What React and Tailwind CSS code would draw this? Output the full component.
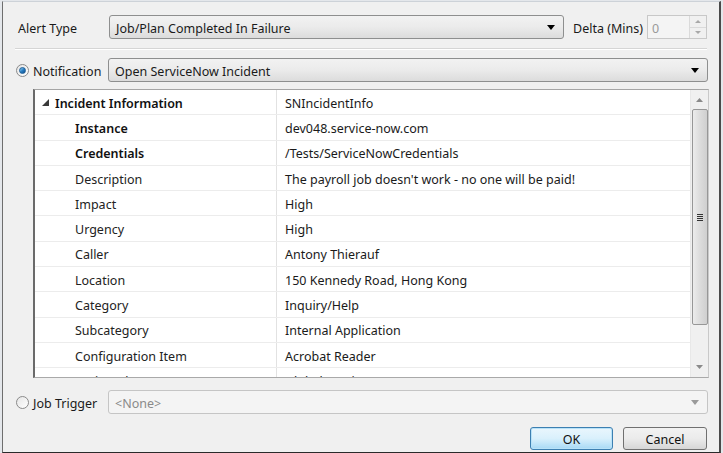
import React from "react";

const Arrow = ({ color = "#000" }) => (
  <svg width="8" height="5" viewBox="0 0 8 5"><path d="M0 0 H8 L4 5 Z" fill={color} /></svg>
);

const Combo = ({ text, width, disabled }) => (
  <div
    className={`flex items-center h-[24px] rounded-[3px] border pl-[6px] pr-[8px] ${
      disabled
        ? "border-[#c5c5c5] bg-[#f4f4f4] text-[#8a8a8a]"
        : "border-[#8e8f8f] bg-gradient-to-b from-[#f2f2f2] via-[#ebebeb] to-[#dcdcdc] text-[#1a1a1a]"
    }`}
    style={{ width }}
  >
    <span className="flex-1 whitespace-nowrap leading-[16px] pt-[3px]">{text}</span>
    <Arrow color={disabled ? "#9a9a9a" : "#000"} />
  </div>
);

const Radio = ({ checked }) => (
  <div className="w-[13px] h-[13px] rounded-full border border-[#8a8a8a] bg-gradient-to-br from-[#e6e6e6] to-[#ffffff] flex items-center justify-center">
    {checked && (
      <div className="w-[7px] h-[7px] rounded-full bg-gradient-to-br from-[#8fd3f5] via-[#2a7fc4] to-[#0d4f8c] border border-[#1d5e97]" />
    )}
  </div>
);

const rows = [
  ["Instance", "dev048.service-now.com", true],
  ["Credentials", "/Tests/ServiceNowCredentials", true],
  ["Description", "The payroll job doesn't work - no one will be paid!", false],
  ["Impact", "High", false],
  ["Urgency", "High", false],
  ["Caller", "Antony Thierauf", false],
  ["Location", "150 Kennedy Road, Hong Kong", false],
  ["Category", "Inquiry/Help", false],
  ["Subcategory", "Internal Application", false],
  ["Configuration Item", "Acrobat Reader", false],
  ["Assigned To", "Global Service", false],
];

const Row = ({ label, value, bold, header }) => (
  <div className="flex h-[25.3px] shrink-0 border-b border-b-[#ececec]">
    <div className={`w-[242px] border-r border-r-[#e2e2e2] flex items-center pt-[3px] ${header ? "pl-[7px]" : "pl-[40px]"}`}>
      {header && (
        <svg width="7" height="7" viewBox="0 0 7 7" className="mr-[6px] -mt-[2px]"><path d="M7 0 V7 H0 Z" fill="#3a3a3a" /></svg>
      )}
      <span className={`whitespace-nowrap leading-[16px] ${bold ? "font-semibold text-[#111]" : "text-[#222]"}`}>{label}</span>
    </div>
    <div className="flex-1 flex items-center pt-[3px] pl-[8px] text-[#1a1a1a] whitespace-nowrap leading-[16px]">{value}</div>
  </div>
);

export default function App() {
  return (
    <div
      className="w-[723px] h-[453px] bg-[#e4e7eb] overflow-hidden text-[12.5px] leading-[16px]"
      style={{ fontFamily: '"Noto Sans", "Open Sans", sans-serif' }}
    >
      <div className="ml-[2px] mt-[1px] w-[719px] h-[452px] bg-[#f0f0f0] border-l border-l-[#6e6e6e] border-t border-t-[#cdd2d8] border-r-[2px] border-r-[#4a4a4a] border-b border-b-[#2a2a2a] flex flex-col">
        {/* Row 1 */}
        <div className="flex items-center mt-[13px] pl-[15px] h-[24px]">
          <span className="w-[91px] shrink-0 pt-[3px] text-[#1a1a1a] whitespace-nowrap">Alert Type</span>
          <Combo text="Job/Plan Completed In Failure" width={455} />
          <span className="ml-[9px] w-[74px] shrink-0 pt-[3px] text-[#1a1a1a] whitespace-nowrap">Delta (Mins)</span>
          <div className="w-[60px] h-[24px] border border-[#c8c8c8] bg-[#f4f4f4] flex">
            <span className="flex-1 pl-[4px] pt-[5px] text-[#9a9a9a]">0</span>
            <div className="w-[17px] flex flex-col border-l border-l-[#dadada]">
              <div className="flex-1 flex items-center justify-center border-b border-b-[#dadada] bg-[#f0f0f0]">
                <svg width="6" height="3" viewBox="0 0 6 3"><path d="M0 3 L3 0 L6 3 Z" fill="#a8a8a8" /></svg>
              </div>
              <div className="flex-1 flex items-center justify-center bg-[#f0f0f0]">
                <svg width="6" height="3" viewBox="0 0 6 3"><path d="M0 0 L6 0 L3 3 Z" fill="#a8a8a8" /></svg>
              </div>
            </div>
          </div>
        </div>

        {/* separator */}
        <div className="mt-[9px] ml-[12px] w-[692px] border-t border-t-[#d5d5d5] border-b border-b-white" />

        {/* Row 2 */}
        <div className="flex items-center mt-[8px] pl-[13px] h-[24px]">
          <Radio checked />
          <span className="ml-[4px] w-[75px] shrink-0 pt-[3px] text-[#1a1a1a] whitespace-nowrap">Notification</span>
          <Combo text="Open ServiceNow Incident" width={600} />
        </div>

        {/* Table */}
        <div className="mt-[7px] ml-[30px] w-[676px] h-[289px] border-t border-t-[#a5a5a5] border-l-[2px] border-l-[#6a6a6a] border-b border-b-[#a9a9a9] border-r border-r-[#c9c9c9] bg-white flex overflow-hidden">
          <div className="flex-1 flex flex-col overflow-hidden">
            <Row label="Incident Information" value="SNIncidentInfo" bold header />
            {rows.map(([l, v, b]) => (
              <Row key={l} label={l} value={v} bold={b} />
            ))}
          </div>
          <div className="w-[18px] bg-[#f0f0f0] border-l border-l-[#e8e8e8] flex flex-col items-center">
            <div className="h-[19px] flex items-center justify-center">
              <svg width="7" height="4" viewBox="0 0 7 4"><path d="M0 4 L3.5 0 L7 4 Z" fill="#8a8a8a" /></svg>
            </div>
            <div className="w-[16px] h-[216px] rounded-[2px] border border-[#979797] bg-gradient-to-r from-[#ececec] via-[#dcdcdc] to-[#cfcfcf] flex items-center justify-center">
              <div className="flex flex-col gap-[1px]">
                <div className="w-[6px] h-[1px] bg-[#333]" />
                <div className="w-[6px] h-[1px] bg-[#333]" />
                <div className="w-[6px] h-[1px] bg-[#333]" />
                <div className="w-[6px] h-[1px] bg-[#333]" />
              </div>
            </div>
            <div className="flex-1" />
            <div className="h-[20px] flex items-center justify-center">
              <svg width="7" height="4" viewBox="0 0 7 4"><path d="M0 0 L7 0 L3.5 4 Z" fill="#8a8a8a" /></svg>
            </div>
          </div>
        </div>

        {/* Row 3 */}
        <div className="flex items-center mt-[12px] pl-[13px] h-[24px]">
          <Radio />
          <span className="ml-[4px] w-[75px] shrink-0 pt-[3px] text-[#1a1a1a] whitespace-nowrap">Job Trigger</span>
          <Combo text="<None>" width={600} disabled />
        </div>

        {/* Buttons */}
        <div className="flex justify-end mt-[13px] pr-[12px] gap-[10px]">
          <button className="w-[83px] h-[23px] pt-[2px] rounded-[3px] border border-[#3c7fb1] bg-gradient-to-b from-[#eaf6fd] via-[#d9f0fc] to-[#a7d9f5] text-[#111] shadow-[inset_0_0_0_1px_#b8e2f8]">
            OK
          </button>
          <button className="w-[84px] h-[23px] pt-[2px] rounded-[3px] border border-[#707070] bg-gradient-to-b from-[#f2f2f2] via-[#ebebeb] to-[#d6d6d6] text-[#111]">
            Cancel
          </button>
        </div>
      </div>
    </div>
  );
}
